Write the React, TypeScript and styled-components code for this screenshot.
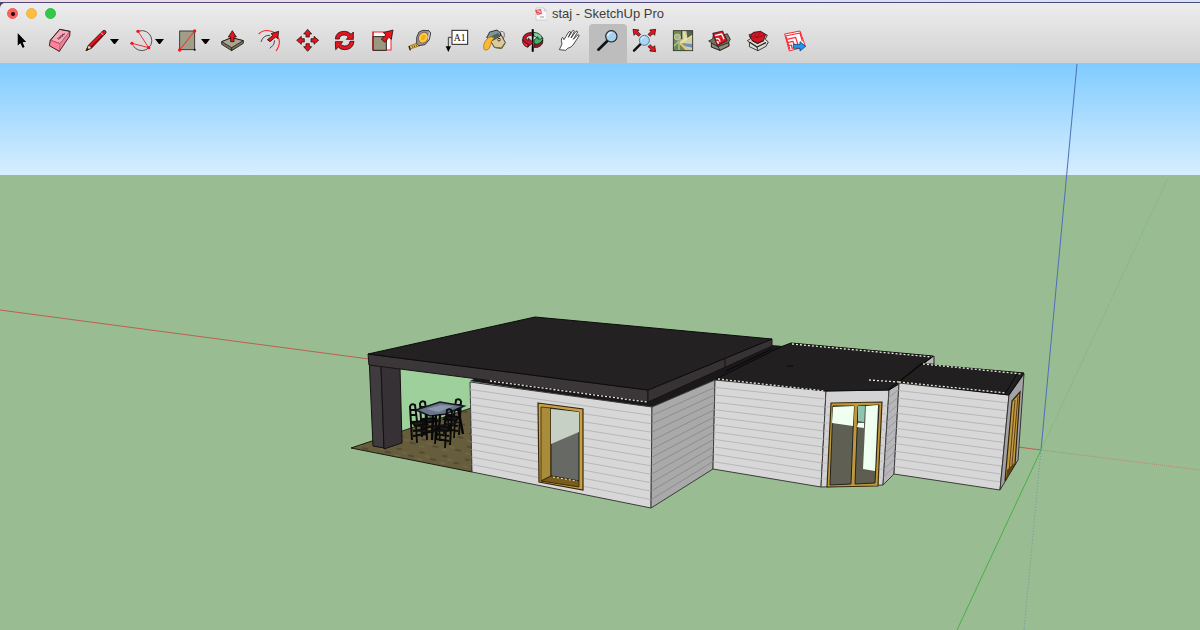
import React from 'react';
import styled, { createGlobalStyle } from 'styled-components';

const GlobalStyle = createGlobalStyle`
  * { box-sizing: border-box; }
  body { margin: 0; font-family: "Liberation Sans", Arial, sans-serif; }
`;

const Page = styled.div`
  display: flex;
  flex-direction: column;
  height: 100vh;
  min-height: 360px;
  background: #4b3a56;
`;

const DesktopStrip = styled.div`
  flex: none;
  height: 3px;
  background: linear-gradient(90deg, #f0d8e4, #dcdcf4 60%, #d4e2f6);
  border-bottom: 1px solid #4e4a78;
`;

const WindowHeader = styled.header`
  flex: none;
  background: linear-gradient(#ededed, #d2d2d2);
  border-bottom: 1px solid #bcbcbc;
  border-radius: 5px 0 0 0;
`;

const TitleBar = styled.div`
  display: grid;
  grid-template-columns: 1fr auto 1fr;
  align-items: center;
  height: 21px;
  padding: 0 8px 0 7px;
`;

const Lights = styled.div`
  display: flex;
  gap: 8px;
`;

const Light = styled.button<{ $fill: string; $edge: string }>`
  display: flex;
  align-items: center;
  justify-content: center;
  width: 11px;
  height: 11px;
  padding: 0;
  border: 1px solid ${(p) => p.$edge};
  border-radius: 50%;
  background: ${(p) => p.$fill};
`;

const EditedDot = styled.span`
  width: 4px;
  height: 4px;
  border-radius: 50%;
  background: #200404;
`;

const Title = styled.h1`
  display: flex;
  align-items: center;
  gap: 5px;
  margin: 0;
  font-size: 13px;
  font-weight: 400;
  line-height: 20px;
  color: #3e3e3e;
`;

const Toolbar = styled.nav`
  display: flex;
  height: 39px;
  padding-left: 3px;
`;

const ToolGroup = styled.div<{ $width: number }>`
  display: flex;
  flex: none;
  width: ${(p) => p.$width}px;
`;

const ToolButton = styled.button<{ $active?: boolean }>`
  display: flex;
  flex: 1;
  align-items: center;
  justify-content: center;
  min-width: 0;
  padding: 0 0 5px;
  border: 0;
  border-radius: 4px 4px 0 0;
  background: ${(p) => (p.$active ? '#bdbdbd' : 'transparent')};
`;

const IconSvg = styled.svg`
  flex: none;
  width: 28px;
  height: 28px;
  overflow: visible;
`;

const CaretSvg = styled.svg`
  flex: none;
  width: 9px;
  height: 5px;
`;

const Viewport = styled.main`
  flex: 1;
  min-height: 0;
  background: #9abc92;
`;

const SceneSvg = styled.svg`
  display: block;
  width: 100%;
  height: 100%;
`;

type Tool = { name: string; x: number; art: React.ReactNode; menu?: boolean; active?: boolean };

const RED = '#e8141e';
const INK = '#1c1010';

const drawTools: Tool[] = [
  {
    name: 'Select', x: 24,
    art: <path d="M53 99 L53 137 L61 130 L68 144 L74 141 L68 127 L79 126 Z" fill="#000" stroke="#fff" strokeWidth="2.5" paintOrder="stroke" />,
  },
  {
    name: 'Eraser', x: 135,
    art: (
      <g stroke={INK} strokeWidth="2.2" strokeLinejoin="round">
        <path d="M179 88 L210 94 L180 131 L151 121 Z" fill="#f8a8b8" />
        <path d="M151 121 L180 131 L178 154 L148 137 Z" fill="#ff8298" stroke="#c84860" />
        <path d="M180 131 L210 94 L209 108 L178 154 Z" fill="#ee8096" stroke="#c06478" />
        <path d="M151 121 L179 88 L210 94 L209 108 L178 154 L148 137 Z" fill="none" />
        <path d="M172 115 l5 3 l1 -7 l4 3 l1 -8 l4 4 l1 -8 l4 3 l1 -5" fill="none" stroke="#5c2444" strokeWidth="2.6" />
      </g>
    ),
  },
];

const menuTools: Tool[] = [
  {
    name: 'Line', x: 249, menu: true,
    art: (
      <g strokeLinejoin="round">
        <path d="M269 135 L311 93 Q316 89 320 93 Q323 97 318 102 L278 144 L261 152 Z" fill={RED} stroke={INK} strokeWidth="2.6" />
        <path d="M269 135 L278 144 L261 152 Z" fill="#f5dfa4" stroke={INK} strokeWidth="2" />
        <path d="M266 143 L261 152 L270 148 Z" fill="#111" />
        <path d="M276 142 L316 101" stroke="#701014" strokeWidth="4" />
        <path d="M305 97 l9 9" stroke="#ddd" strokeWidth="3" />
      </g>
    ),
  },
  {
    name: 'Arc', x: 384, menu: true,
    art: (
      <g fill="none">
        <path d="M420 93 A30 30 0 1 1 402 136" stroke="#333" strokeWidth="2.4" />
        <path d="M417 94 L449 143 L399 130" stroke="#f02028" strokeWidth="2.8" />
        <g fill="#ff1018"><circle cx="417" cy="94" r="5" /><circle cx="449" cy="143" r="5" /><circle cx="399" cy="130" r="5" /></g>
      </g>
    ),
  },
  {
    name: 'Rectangle', x: 519, menu: true,
    art: (
      <g>
        <rect x="539" y="93" width="45" height="56" fill="#a29d87" stroke="#2b2b2b" strokeWidth="2.6" />
        <path d="M539 150 L584 93" stroke="#f02830" strokeWidth="3" />
        <circle cx="539" cy="150" r="5" fill="#ff1018" /><circle cx="584" cy="93" r="5" fill="#ff1018" />
        <circle cx="584" cy="149" r="3" />
      </g>
    ),
  },
];

const mainTools: Tool[] = [
  {
    name: 'Push/Pull', x: 26,
    art: (
      <g stroke={INK} strokeWidth="2.4" strokeLinejoin="round">
        <path d="M34 125 L64 113 L99 122 L99 130 L64 152 L34 133 Z" fill="#77735f" />
        <path d="M34 125 L64 113 L99 122 L64 143 Z" fill="#aaa58c" />
        <path d="M64 143 V152" />
        <path d="M61 125 V111 H54 L66 92 L78 111 H71 V125 Z" fill={RED} />
      </g>
    ),
  },
  {
    name: 'Offset', x: 139,
    art: (
      <g fill="none">
        <path d="M147 102 Q165 84 193 97 Q222 121 199 153" stroke="#ff2028" strokeWidth="3.2" />
        <path d="M154 126 Q160 105 181 106 M195 121 Q196 136 180 145" stroke="#333" strokeWidth="2.6" />
        <path d="M173 119 L190 106 L184 101 L207 94 L204 116 L198 111 L181 125 Z" fill={RED} stroke={INK} strokeWidth="2.4" />
      </g>
    ),
  },
  {
    name: 'Move', x: 251,
    art: (
      <g fill={RED} stroke={INK} strokeWidth="2.2" strokeLinejoin="round">
        {[0, 90, 180, 270].map((a) => (
          <path key={a} transform={`rotate(${a} 292 121)`} d="M287 111 V102 H280 L292 88 L304 102 H297 V111 Z" />
        ))}
      </g>
    ),
  },
  {
    name: 'Rotate', x: 364,
    art: (
      <g fill={RED} stroke={INK} strokeWidth="2.4" strokeLinejoin="round">
        <path d="M377 117 Q379 94 404 94 Q417 94 424 103 L431 96 L431 118 L410 118 L416 111 Q411 105 404 105 Q390 105 389 117 Z" />
        <path d="M433 124 Q430 149 405 149 Q392 149 386 141 L378 149 L377 125 L399 125 L393 133 Q398 138 405 138 Q419 138 421 124 Z" />
      </g>
    ),
  },
  {
    name: 'Scale', x: 476,
    art: (
      <g>
        <rect x="488" y="96" width="54" height="54" fill="#fff" stroke="#fa2028" strokeWidth="3" />
        <path d="M488 110 H528 V151 H488 Z" fill="#9c987f" stroke="#222" strokeWidth="3" />
        <path d="M513 117 L527 105 L519 98 L548 90 L543 118 L536 112 L523 127 Z" fill={RED} stroke={INK} strokeWidth="2.4" />
        <path d="M488 95 V151" stroke="#a01820" strokeWidth="3" />
      </g>
    ),
  },
  {
    name: 'Tape Measure', x: 19,
    art: (
      <g strokeLinejoin="round">
        <path d="M29 138 L58 127 L61 137 L32 147 Z" fill="#ffc22a" stroke="#7c5a10" strokeWidth="2" />
        <path d="M28 138 L32 151" stroke="#222" strokeWidth="4" />
        <path d="M37 137 l2 6 M43 135 l2 6 M49 133 l2 6" stroke="#222" strokeWidth="2" />
        <path d="M51 112 L58 96 L70 91 L88 92 L93 99 L89 119 L76 134 L57 137 L51 130 Z" fill="#9794a0" stroke="#403c48" strokeWidth="3" />
        <ellipse cx="71" cy="113" rx="14" ry="17" transform="rotate(28 71 113)" fill="#ffc42c" stroke="#5b5145" strokeWidth="2" />
        <ellipse cx="71" cy="113" rx="8" ry="11" transform="rotate(28 71 113)" fill="#f8aa18" stroke="#ffdc70" strokeWidth="2" />
        <path d="M89 97 L86 118" stroke="#dedee6" strokeWidth="3" />
      </g>
    ),
  },
  {
    name: 'Text', x: 131,
    art: (
      <g>
        <rect x="155" y="91" width="47" height="42" fill="#fff" stroke="#222" strokeWidth="3" />
        <text x="178" y="122" fontFamily="Liberation Serif, serif" fontSize="29" textAnchor="middle" fill="#111">A1</text>
        <path d="M154 112 H144 V142" fill="none" stroke="#222" strokeWidth="2.6" />
        <path d="M136 139 H152 L144 156 Z" />
      </g>
    ),
  },
  {
    name: 'Paint Bucket', x: 244,
    art: (
      <g stroke={INK} strokeWidth="2.4" strokeLinejoin="round">
        <path d="M298 98 Q314 88 314 105 Q313 121 301 118" fill="none" stroke="#555" />
        <path d="M269 117 L304 103 L317 128 L306 145 L284 142 Z" fill="#dccb9a" />
        <path d="M284 142 L305 145 L316 130" fill="none" stroke="#776a48" strokeWidth="4" />
        <path d="M261 113 L270 96 L292 90 L303 99 L302 108 L277 122 Z" fill="#7f9694" />
        <path d="M271 110 L295 99 L301 106 L279 119 Z" fill="#506260" stroke="none" />
        <path d="M253 148 Q248 128 266 113 Q276 107 283 115 Q273 123 273 134 Q270 148 260 151 Z" fill="#fbb930" stroke="#a47820" />
        <circle cx="298" cy="119" r="4" fill="#f4e5b9" />
      </g>
    ),
  },
  {
    name: 'Orbit', x: 356,
    art: (
      <g stroke={INK} strokeWidth="2.2" strokeLinejoin="round">
        <path d="M397 88 V154" stroke="#000" strokeWidth="5" />
        <path d="M400 97 Q421 98 427 116 L417 130 Q415 111 400 108 Z" fill="#79d79b" />
        <path d="M401 120 L413 110 L413 117 Q421 119 427 113 Q430 130 413 134 V139 L401 129 Z" fill="#38b568" />
        <path d="M393 97 Q367 100 367 119 Q370 130 382 132 V141 L399 128 L384 114 V121 Q374 117 378 112 Q384 106 393 106 Z" fill="#c5152a" />
        <path d="M367 119 V128 Q371 140 383 142 V132 Q371 130 367 119 Z" fill="#e83044" />
        <path d="M401 132 Q417 136 427 120 V129 Q419 145 401 142 Z" fill="#93182a" />
        <path d="M397 88 V112 M397 140 V155" stroke="#000" strokeWidth="5" />
      </g>
    ),
  },
  {
    name: 'Pan', x: 469,
    art: (
      <path
        d="M479 149 L487 132 L485 121 Q485 114 489 112 L493 119 L507 96 Q511 92 513 96 L506 112 L519 92 Q523 90 524 94 L514 114 L529 94 Q533 92 534 96 L521 118 L534 105 Q539 103 538 108 L520 135 Q514 143 504 145 L498 151 Z"
        fill="#fff" stroke="#222" strokeWidth="2.4" strokeLinejoin="round"
      />
    ),
  },
  {
    name: 'Zoom', x: 41, active: true,
    art: (
      <g>
        <path d="M54 149 L80 124" stroke="#111" strokeWidth="8" strokeLinecap="round" />
        <circle cx="93" cy="109" r="17" fill="#a5d0f0" stroke="#222" strokeWidth="3.4" />
        <path d="M82 108 Q84 98 94 97" fill="none" stroke="#e5f4ff" strokeWidth="4" />
      </g>
    ),
  },
  {
    name: 'Zoom Extents', x: 154,
    art: (
      <g>
        <g fill={RED} stroke={INK} strokeWidth="2.2" strokeLinejoin="round">
          <path d="M160 88 L178 90 L174 95 L183 103 L177 109 L168 101 L163 106 Z" />
          <path d="M228 88 L210 90 L214 95 L205 103 L211 109 L220 101 L225 106 Z" />
          <path d="M228 155 L210 153 L214 148 L205 140 L211 134 L220 142 L225 137 Z" />
        </g>
        <path d="M163 152 L184 131" stroke="#111" strokeWidth="7" strokeLinecap="round" />
        <circle cx="194" cy="121" r="15" fill="#a9d6f5" stroke="#5b7890" strokeWidth="3" />
        <path d="M185 119 Q187 111 194 111" fill="none" stroke="#e5f6ff" strokeWidth="3" />
      </g>
    ),
  },
  {
    name: 'Add Location', x: 266,
    art: (
      <g>
        <rect x="279" y="92" width="58" height="60" fill="#6f8a52" />
        <path d="M305 92 H337 V152 H317 L298 132 Z" fill="#cfcfb6" />
        <path d="M318 92 H337 V106 L322 119 Z" fill="#56624e" />
        <path d="M308 92 L316 116 L298 132 L337 106" fill="none" stroke="#f0e58c" strokeWidth="4" />
        <path d="M303 129 L337 132 V143 L308 137 Z" fill="#7391b7" />
        <path d="M300 131 L325 151" stroke="#e6c65c" strokeWidth="5" />
        <circle cx="291" cy="111" r="9" fill="#a8b28e" stroke="#d9ddc4" strokeWidth="2" />
        <path d="M280 139 L296 123 V151" fill="none" stroke="#b8c29d" strokeWidth="4" />
        <path d="M304 93 V118" stroke="#394b34" strokeWidth="4" />
        <rect x="279" y="92" width="58" height="60" fill="none" stroke="#303428" strokeWidth="2.6" />
      </g>
    ),
  },
  {
    name: '3D Warehouse', x: 379,
    art: (
      <g stroke={INK} strokeWidth="2.2" strokeLinejoin="round">
        <path d="M387 123 L399 117 L402 100 L421 109 L443 101 L452 118 L447 126 L448 138 L421 151 L395 141 L396 129 Z" fill="#747260" />
        <path d="M399 100 L429 93 L442 122 L413 137 Z" fill="#d91826" />
        <path d="M406 107 L426 102 L433 118 M409 117 Q419 112 421 125 M411 126 Q416 122 416 131" fill="none" stroke="#fff" strokeWidth="4" />
        <path d="M395 129 L415 140 L447 128 L448 138 L421 151 L395 141 Z" fill="#8f8c78" />
        <path d="M415 140 L421 151" />
      </g>
    ),
  },
  {
    name: 'Share Model', x: 491,
    art: (
      <g stroke={INK} strokeWidth="2.4" strokeLinejoin="round">
        <path d="M501 122 L511 116 L506 104 L530 98 L561 105 L555 118 L564 126 L557 139 L533 152 L507 140 L508 128 Z" fill="#dedbd7" />
        <path d="M509 109 L519 97 L541 94 L556 103 L550 121 L533 130 L516 122 Z" fill="#d51424" />
        <path d="M509 109 L531 113 L556 103 M519 97 L531 113 L541 94" fill="none" stroke="#80101c" strokeWidth="2" />
        <path d="M507 126 L530 141 L557 128" fill="none" stroke="#222" strokeWidth="4" />
        <path d="M530 141 L533 152 M514 121 L531 131 L551 122" fill="none" />
      </g>
    ),
  },
  {
    name: 'Send to LayOut', x: 604,
    art: (
      <g strokeLinejoin="round">
        <path d="M615 102 L661 93 L677 139 L629 153 Z" fill="#fff" stroke="#fb2735" strokeWidth="3" />
        <path d="M617 108 L661 99 L668 124 M622 118 L648 112 L654 132 M626 127 L640 124 L645 138 M628 137 L635 135 L638 147 M619 110 L631 149" fill="none" stroke="#fb2735" strokeWidth="3.6" />
        <path d="M641 133 H661 V125 L678 139 L661 153 V145 H641 Z" fill="#2196ec" stroke="#16406b" strokeWidth="2.4" />
      </g>
    ),
  },
];

function ToolItem({ tool }: { tool: Tool }) {
  return (
    <ToolButton type="button" aria-label={tool.name} aria-pressed={!!tool.active} $active={tool.active}>
      <IconSvg viewBox={`${tool.x} 81 84 84`} aria-hidden="true">{tool.art}</IconSvg>
      {tool.menu && (
        <CaretSvg viewBox="0 0 9 5" aria-hidden="true"><path d="M0 0 H9 L5 5 H4 Z" /></CaretSvg>
      )}
    </ToolButton>
  );
}

type Point = [number, number];
type WallProps = { corners: [Point, Point, Point, Point]; fill: string; line: string; rows?: number };

const mix = (a: Point, b: Point, t: number): Point => [a[0] + (b[0] - a[0]) * t, a[1] + (b[1] - a[1]) * t];

/* Clapboard wall; corners run top-left, top-right, bottom-right, bottom-left. */
function Wall({ corners, fill, line, rows = 12 }: WallProps) {
  const [tl, tr, br, bl] = corners;
  return (
    <g>
      <polygon points={corners.join(' ')} fill={fill} stroke="#3c3c3c" strokeWidth="1" />
      {Array.from({ length: rows - 1 }, (_, i) => {
        const a = mix(tl, bl, (i + 1) / rows);
        const b = mix(tr, br, (i + 1) / rows);
        return <line key={i} x1={a[0]} y1={a[1]} x2={b[0]} y2={b[1]} stroke={line} strokeWidth="1" />;
      })}
    </g>
  );
}

function Chair({ x, y, lean = 1 }: { x: number; y: number; lean?: number }) {
  return (
    <g transform={`translate(${x} ${y}) scale(${lean} 1)`} fill="none" stroke="#0b0b0b" strokeWidth="2">
      <path d="M0 2 Q2 -1 5 1 L7 17 M0 2 L2 36 M1 6 H5 M1 11 H6" />
      <path d="M2 18 L14 17 L17 20 L5 22 Z" fill="#1b1c1d" />
      <path d="M6 21 L7 39 M16 20 L17 35 M13 19 L12 32 M3 27 L17 25 M3 32 L16 30" strokeWidth="1.8" />
    </g>
  );
}

function Scene() {
  const dash = { fill: 'none', stroke: '#e8e8d8', strokeWidth: 1.3, strokeDasharray: '2 2' };
  return (
    <SceneSvg viewBox="0 64 1200 566" preserveAspectRatio="xMidYMid slice" role="img" aria-label="House model">
      <defs>
        <linearGradient id="sky" x1="0" y1="0" x2="0" y2="1">
          <stop offset="0" stopColor="#80ccff" />
          <stop offset="1" stopColor="#d8eefe" />
        </linearGradient>
        <pattern id="stone" width="23" height="13" patternUnits="userSpaceOnUse" patternTransform="rotate(9)">
          <rect width="23" height="13" fill="#665d3d" />
          <path d="M2 4 h5 M14 9 h6" stroke="#554b31" strokeWidth="2" />
          <path d="M8 7 h5 M1 11 h5" stroke="#6f6643" strokeWidth="2" />
        </pattern>
      </defs>
      <rect y="64" width="1200" height="112" fill="url(#sky)" />
      <rect y="175" width="1200" height="455" fill="#9abc92" />

      <g fill="none" strokeWidth="1">
        <path d="M0 310 L369 359" stroke="#bb6050" />
        <path d="M1018 447 L1041 450" stroke="#bb6050" />
        <path d="M1041 450 L1200 470" stroke="#b58b70" strokeDasharray="1 1" />
        <path d="M1077 64 L1041 450" stroke="#4d70b6" />
        <path d="M1041 450 L1024 630" stroke="#6d9aa0" strokeDasharray="1 2" />
        <path d="M1041 450 L957 630" stroke="#46b046" />
        <path d="M1041 450 L1168 178" stroke="#78b876" strokeDasharray="1 1" />
      </g>

      {/* terrace */}
      <polygon points="351,448 471,408 472,472" fill="url(#stone)" stroke="#1c1a12" />
      <polygon points="400,366 473,378 471,408 402,431" fill="#9ed09c" />
      <path d="M402 431 L471 408" stroke="#333" />
      <g>
        <Chair x={420} y={401} />
        <Chair x={461} y={399} lean={-1} />
        <polygon points="416,410 440,402 464,406 446,414 430,416" fill="#69758a" stroke="#151a20" strokeWidth="1.6" />
        <polygon points="427,409 441,405 454,406 438,412" fill="#8997aa" />
        <Chair x={410} y={404} />
        <Chair x={452} y={409} lean={-1} />
        <path d="M433 415 L432 440 M436 415 V439 M426 414 V433 M440 414 L439 432 M458 408 L463 434" stroke="#080808" strokeWidth="2.4" />
        <path d="M415 426 H437 M415 431 H450 M437 426 L460 422" stroke="#111" strokeWidth="1.5" />
      </g>
      <polygon points="369,356 381,366 384,448 373,446" fill="#403b3e" stroke="#131112" />
      <polygon points="381,366 400,368 402,443 384,449" fill="#353135" stroke="#131112" />

      {/* main block */}
      <polygon points="470,381 478,377 648,400 772,345 783,346 716,381 652,408" fill="#1a181a" />
      <Wall corners={[[470, 382], [652, 407], [651, 508], [472, 472]]} fill="#d7d7d8" line="#b7b7ba" />
      <Wall corners={[[652, 407], [715, 380], [713, 469], [651, 508]]} fill="#a9a9aa" line="#8d8d90" />
      <polygon points="368,354 648,390 648,402 478,379 369,365" fill="#3b3638" stroke="#171516" />
      <polygon points="648,390 772,339 772,346 648,402" fill="#373335" stroke="#171516" />
      <path d="M725 359 V368" stroke="#111" />
      <polygon points="368,354 535,317 772,339 648,390" fill="#232122" stroke="#0d0c0d" />
      <path d="M490 381 L647 402" {...dash} />

      {/* window */}
      <polygon points="538,403 583,409 583,490 539,482" fill="#caa044" stroke="#33260b" strokeWidth="1.2" />
      <polygon points="541,407 551,408 551,476 541,481" fill="#a98c3a" stroke="#4a3b17" />
      <polygon points="551,408 579,412 579,481 551,476" fill="#666964" stroke="#201d14" />
      <polygon points="551,409 579,412 579,432 551,444" fill="#c6d0c5" />
      <polygon points="541,481 551,476 579,481 579,487" fill="#775c1b" stroke="#3a2c0d" />
      <path d="M553 477 L577 481" {...dash} strokeWidth="1" />

      {/* middle block with bay */}
      <polygon points="934,356 934,364 922,364" fill="#b8b7bc" stroke="#222" />
      <Wall corners={[[715, 380], [826, 391], [821, 487], [713, 469]]} fill="#d7d7d8" line="#b7b7ba" />
      <Wall corners={[[826, 391], [889, 390], [883, 485], [821, 487]]} fill="#d3d3d5" line="#bfbfc2" />
      <Wall corners={[[889, 390], [899, 382], [894, 474], [883, 485]]} fill="#b7b7ba" line="#9b9ba0" />
      <polygon points="827,392 888,391 887,402 826,404" fill="#d3d3d5" />
      <polygon points="716,379 783,346 791,343 933,356 899,384 889,390 826,391" fill="#211f20" stroke="#0c0b0c" />
      <path d="M718 379 L825 391 M792 344 L932 357" {...dash} />
      <path d="M932 357 L889 389 M922 363 L897 383 M787 366 h6 M726 371 L772 349" stroke="#080808" fill="none" />

      {/* glazed doors */}
      <polygon points="831,403 882,402 878,486 827,487" fill="#bf983c" stroke="#3b2d0c" strokeWidth="1.2" />
      <polygon points="833,406 854,406 851,484 830,485" fill="#5f5f53" stroke="#222" />
      <polygon points="833,407 854,406 853,426 832,423" fill="#effff0" />
      <polygon points="858,406 879,405 875,483 855,484" fill="#5d5d51" stroke="#222" />
      <polygon points="858,406 865,406 864,422 858,421" fill="#8fc5b0" />
      <polygon points="858,423 864,423 864,428 857,427" fill="#f2fff2" />
      <polygon points="866,406 878,405 875,471 863,469" fill="#effff0" />

      {/* right wing */}
      <Wall corners={[[899, 383], [1009, 395], [1000, 490], [894, 474]]} fill="#d7d7d8" line="#b7b7ba" />
      <polygon points="1009,395 1024,374 1018,460 1000,490" fill="#a3a2a7" stroke="#333" />
      <polygon points="1012,401 1020,392 1015,464 1005,481" fill="#c29a40" stroke="#322408" strokeWidth="1.2" />
      <path d="M1015 400 L1009 472 M1018 396 L1012 465" stroke="#5a4318" />
      <polygon points="1007,470 1014,463 1013,468 1006,480" fill="#5a431a" />
      <polygon points="922,364 1024,373 1009,395 899,382" fill="#211f20" stroke="#0c0b0c" />
      <path d="M1017 374 L1005 394" stroke="#080808" />
      <path d="M923 364 L1022 374 M899 382 L1006 393 M869 380 L899 382" {...dash} />
    </SceneSvg>
  );
}

export default function App() {
  return (
    <Page>
      <GlobalStyle />
      <DesktopStrip />
      <WindowHeader>
        <TitleBar>
          <Lights>
            <Light type="button" aria-label="Close" $fill="#fc605c" $edge="#f0605c"><EditedDot /></Light>
            <Light type="button" aria-label="Minimize" $fill="#fdbc40" $edge="#f0b440" />
            <Light type="button" aria-label="Full screen" $fill="#34c84a" $edge="#30bc46" />
          </Lights>
          <Title>
            <svg width="12" height="14" viewBox="0 0 12 14" aria-hidden="true">
              <path d="M1 1 H9 L12 4 V13 H1 Z" fill="#f7f7f7" stroke="#c4c4c4" strokeWidth="0.7" />
              <path d="M9 1 V4 H12" fill="#ddd" stroke="#bbb" strokeWidth="0.5" />
              <path d="M0 3 L6 2 L7 7 L2 8 Z" fill="#e2525c" />
              <path d="M2 4 L5 4 L5 6 M3 6 V7" fill="none" stroke="#fff" strokeWidth="0.8" />
              <path d="M5 10 H9" stroke="#999" />
            </svg>
            staj - SketchUp Pro
          </Title>
        </TitleBar>
        <Toolbar aria-label="Tools">
          <ToolGroup $width={75}>{drawTools.map((t) => <ToolItem key={t.name} tool={t} />)}</ToolGroup>
          <ToolGroup $width={136}>{menuTools.map((t) => <ToolItem key={t.name} tool={t} />)}</ToolGroup>
          <ToolGroup $width={600}>{mainTools.map((t) => <ToolItem key={t.name} tool={t} />)}</ToolGroup>
        </Toolbar>
      </WindowHeader>
      <Viewport><Scene /></Viewport>
    </Page>
  );
}
